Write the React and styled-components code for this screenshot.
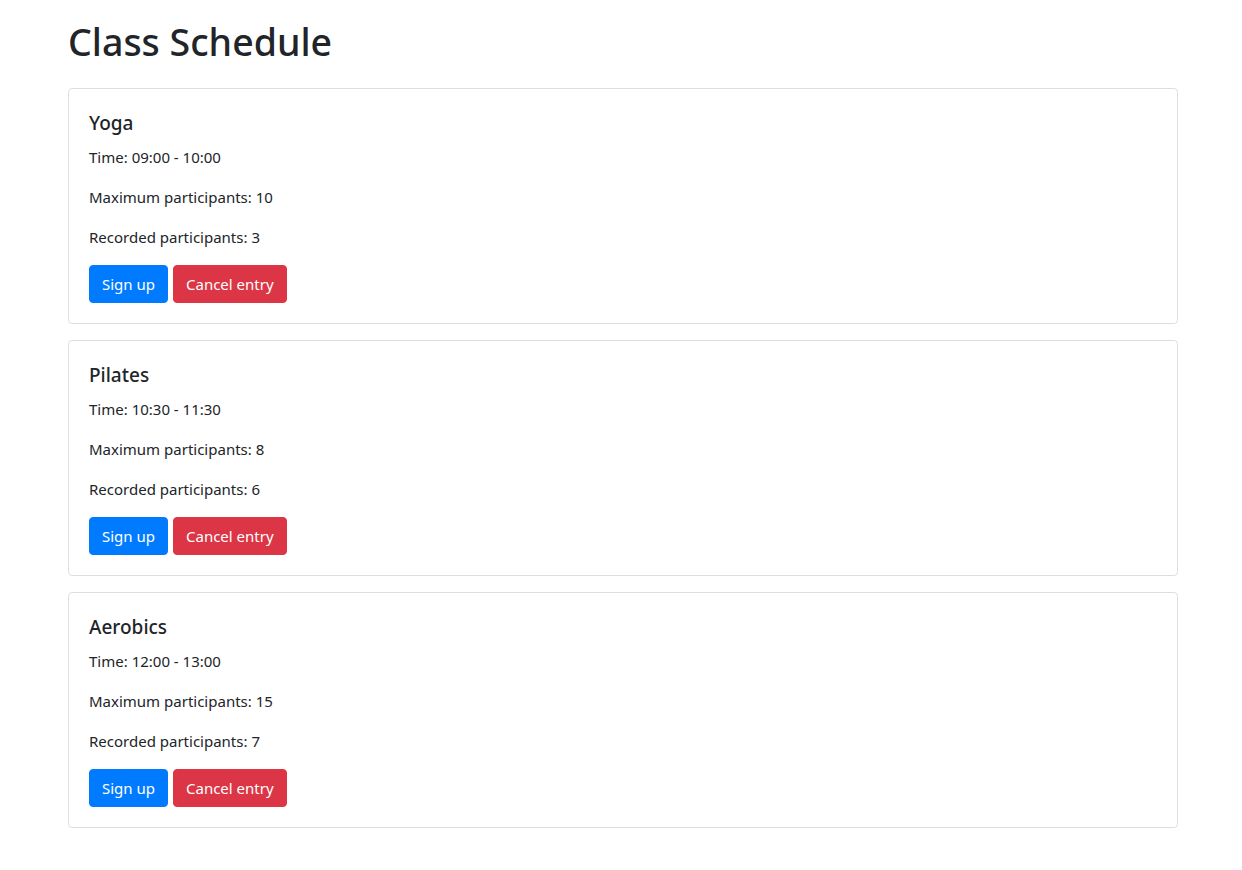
import React from "react";
import styled, { createGlobalStyle } from "styled-components";

const GlobalStyle = createGlobalStyle`
  *, *::before, *::after { box-sizing: border-box; }
  body {
    margin: 0;
    font-family: "Noto Sans", "Open Sans", sans-serif;
    font-size: 15px;
    line-height: 24px;
    color: #212529;
    background: #fff;
  }
`;

const Container = styled.div`
  width: 1110px;
  margin-left: 68px;
  padding-top: 18px;
`;

const PageTitle = styled.h1`
  font-size: 37.5px;
  font-weight: 500;
  line-height: 48px;
  margin: 0 0 22px 0;
`;

const Card = styled.div`
  border: 1px solid rgba(0, 0, 0, 0.125);
  border-radius: 4px;
  padding: 20px;
  margin-bottom: 16px;
`;

const CardTitle = styled.h5`
  font-size: 19px;
  font-weight: 500;
  line-height: 24px;
  margin: 0 0 10px 0;
  padding-top: 2px;
`;

const CardText = styled.p`
  margin: 0 0 16px 0;
`;

const Actions = styled.div`
  display: flex;
  gap: 5px;
`;

const Button = styled.button`
  font-family: inherit;
  font-size: 15px;
  line-height: 24px;
  padding: 6px 12px;
  border: 1px solid ${(p) => p.$color};
  border-radius: 4px;
  background: ${(p) => p.$color};
  color: #fff;
  cursor: pointer;
`;

const classes = [
  { name: "Yoga", time: "09:00 - 10:00", max: 10, recorded: 3 },
  { name: "Pilates", time: "10:30 - 11:30", max: 8, recorded: 6 },
  { name: "Aerobics", time: "12:00 - 13:00", max: 15, recorded: 7 },
];

export default function App() {
  return (
    <>
      <GlobalStyle />
      <Container>
        <PageTitle>Class Schedule</PageTitle>
        {classes.map((c) => (
          <Card key={c.name}>
            <CardTitle>{c.name}</CardTitle>
            <CardText>Time: {c.time}</CardText>
            <CardText>Maximum participants: {c.max}</CardText>
            <CardText>Recorded participants: {c.recorded}</CardText>
            <Actions>
              <Button $color="#007bff">Sign up</Button>
              <Button $color="#dc3545">Cancel entry</Button>
            </Actions>
          </Card>
        ))}
      </Container>
    </>
  );
}
